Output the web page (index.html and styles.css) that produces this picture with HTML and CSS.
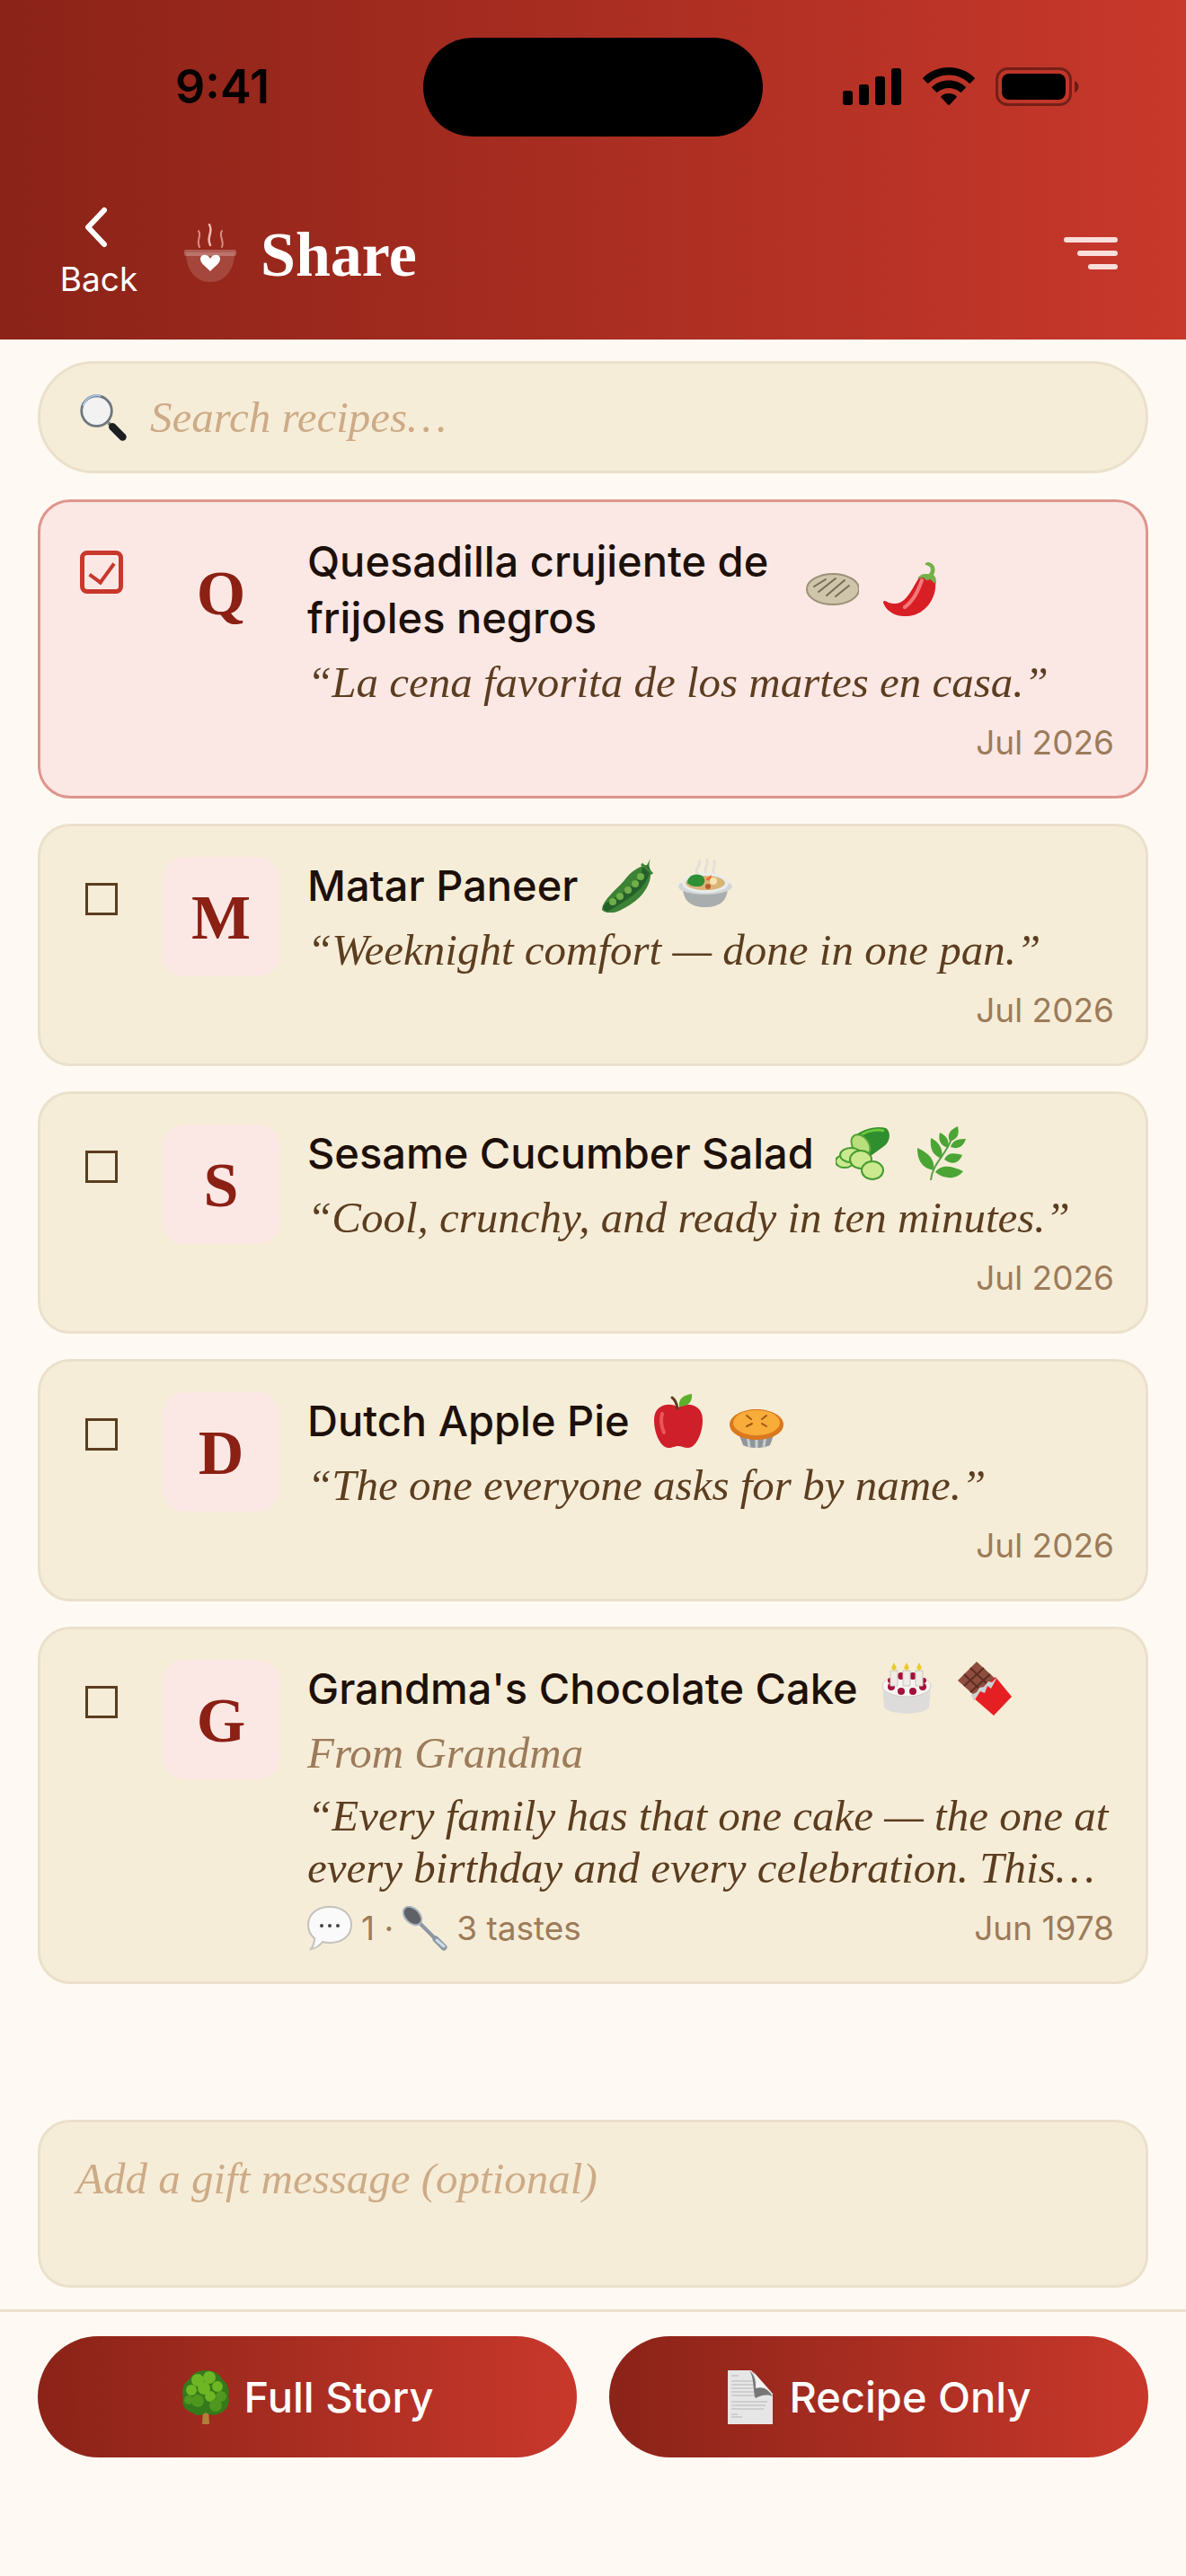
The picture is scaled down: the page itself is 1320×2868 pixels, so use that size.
FILE: index.html
```html
<!DOCTYPE html>
<html lang="en">
<head>
    <meta charset="UTF-8">
    <meta name="viewport" content="width=device-width, initial-scale=1.0">
    <title>Share</title>
    <link rel="stylesheet" href="styles.css">
</head>
<body>
    <header class="header">
        <!-- phone status bar -->
        <div class="status-bar">
            <div class="time">9:41</div>
            <div class="island"></div>
            <div class="status-icons">
                <svg width="66" height="44" viewBox="0 0 66 44">
                    <rect x="0" y="26" width="11" height="16" rx="3"/>
                    <rect x="18" y="19" width="11" height="23" rx="3"/>
                    <rect x="36" y="10" width="11" height="32" rx="3"/>
                    <rect x="54" y="1" width="11" height="41" rx="3"/>
                </svg>
                <svg width="58" height="44" viewBox="0 0 58 44">
                    <path d="M29 0C40 0 50 4 57.500 11.500C58 12 58 12.500 57.500 13L53 17.500C52.500 18 52 18 51.500 17.500C45 11.500 37.500 8.500 29 8.500S13 11.500 6.500 17.500C6 18 5.500 18 5 17.500L.5 13C0 12.500 0 12 .5 11.500C8 4 18 0 29 0Z"/>
                    <path d="M29 14.500C36 14.500 42.500 17 47.500 21.500C48 22 48 22.500 47.500 23L43 27.500C42.500 28 42 28 41.500 27.500C38 24.500 33.500 23 29 23S20 24.500 16.500 27.500C16 28 15.500 28 15 27.500L10.500 23C10 22.500 10 22 10.500 21.500C15.500 17 22 14.500 29 14.500Z"/>
                    <path d="M29 29C32.500 29 35.500 30.200 37.500 32C38 32.500 38 33 37.500 33.500L30 41.500C29.500 42 28.500 42 28 41.500L20.500 33.500C20 33 20 32.500 20.500 32C22.500 30.200 25.500 29 29 29Z"/>
                </svg>
                <svg width="94" height="44" viewBox="0 0 94 44">
                    <rect x="1.500" y="1.500" width="82" height="40" rx="12" fill="none" stroke="#000" stroke-opacity=".4" stroke-width="3"/>
                    <rect x="7" y="7" width="71" height="29" rx="8"/>
                    <path d="M88 15C94 17 94 26 88 28Z" fill-opacity=".45"/>
                </svg>
            </div>
        </div>

        <div class="nav">
            <button class="back" type="button">
                <svg width="30" height="48" viewBox="0 0 30 48">
                    <path d="M21 5L3 24L21 43" fill="none" stroke="#fff" stroke-width="6" stroke-linecap="round" stroke-linejoin="round"/>
                </svg>
                <span>Back</span>
            </button>
            <svg class="logo" width="58" height="66" viewBox="0 0 58 66">
                <g fill="none" stroke="#f3b9b0" stroke-linecap="round">
                    <path d="M16 8C20 14 13 18 17 26" stroke-width="2" opacity=".7"/>
                    <path d="M28 1C33 10 24 14 29 24" stroke-width="2.500"/>
                    <path d="M42 8C38 14 45 18 42 26" stroke-width="2" opacity=".7"/>
                </g>
                <path d="M2 32H56C56 52 45 65 29 65S2 52 2 32Z" fill="#fff" fill-opacity=".15"/>
                <rect x="0" y="29" width="58" height="7" rx="2" fill="#fff" fill-opacity=".25"/>
                <path d="M29 53C22 46 18 44 18 39C18 34 26 33 29 39C32 33 40 34 40 39C40 44 36 46 29 53Z" fill="#fff"/>
            </svg>
            <h1>Share</h1>
            <button class="menu" type="button" aria-label="Menu">
                <span></span>
                <span></span>
                <span></span>
            </button>
        </div>
    </header>

    <main class="content">
        <label class="search">
            <svg width="56" height="56" viewBox="0 0 60 60">
                <path d="M36 36L41 41" stroke="#777" stroke-width="4"/>
                <path d="M41 41L53 53" stroke="#1b1f22" stroke-width="9" stroke-linecap="round"/>
                <circle cx="22" cy="22" r="18" fill="#f2f2f2" stroke="#6d7780" stroke-width="3"/>
                <path d="M6 16A17 17 0 0 1 27 4" fill="none" stroke="#a9cbe8" stroke-width="2"/>
            </svg>
            <input type="text" placeholder="Search recipes…" aria-label="Search recipes">
        </label>

        <div class="recipes">
            <div class="card selected">
                <input type="checkbox" id="r1" checked>
                <div class="avatar">Q</div>
                <div class="info">
                    <div class="title-row">
                        <label class="title long" for="r1">Quesadilla crujiente de frijoles negros</label>
                        <div class="emojis">
                            <svg width="60" height="60" viewBox="0 0 60 60">
                                <ellipse cx="31" cy="30" rx="29" ry="17" fill="#cfc5ab" stroke="#9c9078" stroke-width="2"/>
                                <path d="M10 27L23 19M15 33L34 18M24 37L44 20M34 38L49 26" stroke="#776b57" stroke-width="2" stroke-linecap="round"/>
                            </svg>
                            <svg width="60" height="60" viewBox="0 0 60 60">
                                <path d="M40 17C46 12 56 15 58 22C60 38 48 59 27 60C13 61 3 54 0 45C0 42 3 43 6 45C24 51 31 31 40 17Z" fill="#d91f26"/>
                                <path d="M43 20C39 32 34 43 24 50" fill="none" stroke="#f4787a" stroke-width="4" stroke-linecap="round"/>
                                <path d="M38 18C43 12 45 13 51 13C54 9 54 4 47 3C46 0 49 0 51 0C58 2 59 9 56 14C59 17 59 20 59 24C56 23 54 20 52 19C49 21 47 20 45 17Z" fill="#76b04a"/>
                            </svg>
                        </div>
                    </div>
                    <p class="quote">“La cena favorita de los martes en casa.”</p>
                    <div class="meta"><span class="date">Jul 2026</span></div>
                </div>
            </div>

            <div class="card">
                <input type="checkbox" id="r2">
                <div class="avatar">M</div>
                <div class="info">
                    <div class="title-row">
                        <label class="title" for="r2">Matar Paneer</label>
                        <div class="emojis">
                            <svg width="60" height="60" viewBox="0 0 60 60">
                                <path d="M56 0C54 6 54 8 56 13C58 32 42 48 25 56C17 61 7 62 2 57C3 45 18 35 27 24C34 14 44 8 52 7Z" fill="#3c8236"/>
                                <path d="M8 54C22 45 48 32 51 13" fill="none" stroke="#24602a" stroke-width="9" stroke-linecap="round"/>
                                <g fill="#6fae48">
                                    <circle cx="14" cy="48" r="4"/>
                                    <circle cx="22" cy="42" r="4"/>
                                    <circle cx="31" cy="35" r="4"/>
                                    <circle cx="39" cy="28" r="4"/>
                                    <circle cx="45" cy="20" r="4"/>
                                </g>
                                <path d="M46 6L53 12L58 17" fill="none" stroke="#3c8236" stroke-width="3"/>
                            </svg>
                            <svg width="60" height="60" viewBox="0 0 60 60">
                                <path d="M22 17C16 10 27 8 23 1M31 16C27 9 36 7 31 0M40 17C35 11 44 8 39 2" fill="none" stroke="#e4e0d6" stroke-width="3"/>
                                <path d="M5 34H55C54 47 46 54 30 54S6 47 5 34Z" fill="#a9adae"/>
                                <ellipse cx="30" cy="31" rx="30" ry="9" fill="#d3d6d7"/>
                                <ellipse cx="30" cy="27" rx="26" ry="11" fill="#e9ecec"/>
                                <ellipse cx="30" cy="27" rx="22" ry="8" fill="#d9b476"/>
                                <path d="M10 27C10 20 17 16 24 18C31 20 31 29 24 31C18 31 14 31 10 27Z" fill="#2f8f35"/>
                                <path d="M30 23L37 18L36 25Z" fill="#ee7132"/>
                                <circle cx="39" cy="25" r="4" fill="#f6e3b1"/>
                                <circle cx="33" cy="31" r="3" fill="#bc5c2c"/>
                            </svg>
                        </div>
                    </div>
                    <p class="quote">“Weeknight comfort — done in one pan.”</p>
                    <div class="meta"><span class="date">Jul 2026</span></div>
                </div>
            </div>

            <div class="card">
                <input type="checkbox" id="r3">
                <div class="avatar">S</div>
                <div class="info">
                    <div class="title-row">
                        <label class="title" for="r3">Sesame Cucumber Salad</label>
                        <div class="emojis">
                            <svg width="60" height="60" viewBox="0 0 60 60">
                                <path d="M19 13C28 3 46 -1 56 2C62 6 61 17 54 22L39 33L22 27Z" fill="#2f8e2d"/>
                                <path d="M29 9C38 4 48 3 54 5" fill="none" stroke="#6dc83e" stroke-width="3"/>
                                <ellipse cx="28" cy="21" rx="9" ry="13" transform="rotate(-35 28 21)" fill="#b9df7c" stroke="#56a537" stroke-width="2"/>
                                <g fill="#cbe98f" stroke="#469a31" stroke-width="2">
                                    <ellipse cx="10" cy="39" rx="10" ry="7"/>
                                    <ellipse cx="17" cy="32" rx="12" ry="8"/>
                                    <ellipse cx="28" cy="37" rx="12" ry="10"/>
                                    <ellipse cx="41" cy="49" rx="12" ry="10"/>
                                </g>
                            </svg>
                            <svg width="60" height="60" viewBox="0 0 60 60">
                                <path d="M19 60C20 42 38 30 43 11" fill="none" stroke="#5d9e4c" stroke-width="2"/>
                                <g fill="#4aa535">
                                    <path d="M40 17C36 8 42 3 49 0C51 9 49 14 40 17Z"/>
                                    <path d="M38 24C29 21 27 15 29 7C37 11 40 16 38 24Z"/>
                                    <path d="M41 23C43 15 50 14 58 14C55 23 49 26 41 23Z"/>
                                    <path d="M31 36C20 32 18 24 19 13C29 18 33 26 31 36Z"/>
                                    <path d="M34 37C37 29 45 29 54 32C50 42 42 43 34 37Z"/>
                                    <path d="M22 49C8 46 4 37 4 24C17 30 24 37 22 49Z"/>
                                    <path d="M24 51C31 42 42 44 55 50C47 60 34 59 24 51Z"/>
                                </g>
                            </svg>
                        </div>
                    </div>
                    <p class="quote">“Cool, crunchy, and ready in ten minutes.”</p>
                    <div class="meta"><span class="date">Jul 2026</span></div>
                </div>
            </div>

            <div class="card">
                <input type="checkbox" id="r4">
                <div class="avatar">D</div>
                <div class="info">
                    <div class="title-row">
                        <label class="title" for="r4">Dutch Apple Pie</label>
                        <div class="emojis">
                            <svg width="60" height="60" viewBox="0 0 60 60">
                                <path d="M30 15C38 9 57 10 57 29C57 45 49 60 41 60C36 60 34 58 30 58S24 60 19 60C11 60 3 45 3 29C3 10 22 9 30 15Z" fill="#cf1f2a"/>
                                <path d="M12 22C10 29 11 36 14 43" fill="none" stroke="#ea5558" stroke-width="4" stroke-linecap="round"/>
                                <path d="M29 16C28 10 26 6 23 4" fill="none" stroke="#5d3b22" stroke-width="3" stroke-linecap="round"/>
                                <path d="M31 14C30 5 36 1 45 0C46 9 40 14 31 14Z" fill="#5cb02c"/>
                            </svg>
                            <svg width="60" height="60" viewBox="0 0 60 60">
                                <path d="M8 38L15 57C22 61 38 61 45 57L52 38Z" fill="#8f9599"/>
                                <path d="M20 46L22 59M30 47V60M40 46L38 59" stroke="#c9ced1" stroke-width="3"/>
                                <path d="M0 34C0 25 13 17 30 17S60 25 60 34C60 44 46 51 30 51S0 44 0 34Z" fill="#d9781d"/>
                                <ellipse cx="30" cy="32" rx="26" ry="14" fill="#f8ad3a"/>
                                <path d="M24 28L19 24M36 28L41 24M25 33L19 36M36 33L41 36" stroke="#9e5714" stroke-width="2" stroke-linecap="round"/>
                            </svg>
                        </div>
                    </div>
                    <p class="quote">“The one everyone asks for by name.”</p>
                    <div class="meta"><span class="date">Jul 2026</span></div>
                </div>
            </div>

            <div class="card">
                <input type="checkbox" id="r5">
                <div class="avatar">G</div>
                <div class="info">
                    <div class="title-row">
                        <label class="title" for="r5">Grandma's Chocolate Cake</label>
                        <div class="emojis">
                            <svg width="60" height="60" viewBox="0 0 60 60">
                                <path d="M3 27H57L55 51C49 60 11 60 5 51Z" fill="#dedcdb"/>
                                <ellipse cx="30" cy="27" rx="27" ry="12" fill="#f7f5f2" stroke="#d2cecb"/>
                                <g fill="#a3103c">
                                    <circle cx="24" cy="16" r="4"/>
                                    <circle cx="37" cy="16" r="4"/>
                                    <circle cx="12" cy="21" r="3"/>
                                    <circle cx="49" cy="21" r="3"/>
                                    <circle cx="13" cy="28" r="4"/>
                                    <circle cx="24" cy="33" r="4"/>
                                    <circle cx="37" cy="33" r="4"/>
                                    <circle cx="48" cy="28" r="4"/>
                                </g>
                                <path d="M12 10H20V27H12ZM26 10H34V27H26ZM40 10H48V27H40Z" fill="#eeece4" stroke="#cbc6b8"/>
                                <path d="M16 1L19 7L16 10L13 7ZM30 1L33 7L30 10L27 7ZM44 1L47 7L44 10L41 7Z" fill="#ecc928"/>
                            </svg>
                            <svg width="60" height="60" viewBox="0 0 60 60">
                                <path d="M21 0L44 21L22 41L0 21Z" fill="#8d4e3d"/>
                                <path d="M14 7L36 28M7 14L29 35M29 7L7 27M36 14L14 34" stroke="#5f2d22" stroke-width="2"/>
                                <path d="M42 17L60 39L40 60L17 40Z" fill="#e61f23"/>
                                <path d="M44 17L37 30L33 27L30 35L25 33L18 44L15 37L21 34L24 29L29 28L34 22L38 23Z" fill="#ced0d2"/>
                            </svg>
                        </div>
                    </div>
                    <p class="from">From Grandma</p>
                    <p class="quote">“Every family has that one cake — the one at every birthday and every celebration. This…</p>
                    <div class="meta">
                        <svg width="50" height="50" viewBox="0 0 50 50">
                            <path d="M25 1C39 1 49 9 49 21S39 41 25 41C22 41 20 41 17 40C14 44 10 47 4 48C7 44 8 41 8 36C3 32 1 27 1 21C1 9 11 1 25 1Z" fill="#fafafa" stroke="#c3c1bc" stroke-width="2"/>
                            <circle cx="16" cy="22" r="2" fill="#444"/>
                            <circle cx="25" cy="22" r="2" fill="#444"/>
                            <circle cx="34" cy="22" r="2" fill="#444"/>
                        </svg>
                        <span>1 ·</span>
                        <svg width="50" height="50" viewBox="0 0 50 50">
                            <path d="M18 18L43 43" stroke="#8d97a3" stroke-width="4" stroke-linecap="round"/>
                            <path d="M37 37L46 46" stroke="#8d97a3" stroke-width="7" stroke-linecap="round"/>
                            <path d="M38 38L46 45" stroke="#cddcec" stroke-width="3" stroke-linecap="round"/>
                            <ellipse cx="11" cy="11" rx="8" ry="12" transform="rotate(-45 11 11)" fill="#5e6165" stroke="#aab4bf" stroke-width="2"/>
                        </svg>
                        <span>3 tastes</span>
                        <span class="date">Jun 1978</span>
                    </div>
                </div>
            </div>
        </div>

        <textarea class="message" placeholder="Add a gift message (optional)" aria-label="Gift message"></textarea>
    </main>

    <footer class="footer">
        <button class="button" type="button">
            <svg width="54" height="60" viewBox="0 0 54 60">
                <path d="M24 44H30L31 60H23Z" fill="#b0803b"/>
                <path d="M27 0C35 0 42 3 45 10C51 14 54 21 52 29C55 37 49 46 42 48C36 51 32 50 27 47C22 51 16 51 12 47C4 45 -1 37 2 30C-1 22 3 13 9 10C12 3 19 0 27 0Z" fill="#347a1b"/>
                <g fill="#6fb624">
                    <circle cx="18" cy="11" r="7"/>
                    <circle cx="31" cy="8" r="7"/>
                    <circle cx="11" cy="22" r="6"/>
                    <circle cx="25" cy="20" r="7"/>
                    <circle cx="40" cy="18" r="6"/>
                    <circle cx="32" cy="29" r="6"/>
                </g>
                <g fill="#4f971f">
                    <circle cx="18" cy="34" r="7"/>
                    <circle cx="8" cy="33" r="5"/>
                    <circle cx="44" cy="29" r="6"/>
                    <circle cx="38" cy="39" r="7"/>
                </g>
            </svg>
            Full Story
        </button>
        <button class="button" type="button">
            <svg width="54" height="60" viewBox="0 0 54 60">
                <path d="M2 0H28L52 26V60H2Z" fill="#e6e6e6"/>
                <path d="M6 6H14M6 12H30M6 16H32M6 20H30M6 24H32M6 28H32M6 35H46M6 39H44M6 43H42M6 49H13M6 52H18" stroke="#b5b5b5" stroke-width="1"/>
                <path d="M26 0C33 7 33 12 33 20C41 18 46 20 52 29C45 26 39 28 33 31C30 27 32 9 26 0Z" fill="#777"/>
                <path d="M30 1L51 25C45 19 39 18 34 19C34 12 34 7 30 1Z" fill="#f4f4f4"/>
            </svg>
            Recipe Only
        </button>
    </footer>
</body>
</html>
```

FILE: styles.css
```css
* {
    box-sizing: border-box;
}
body {
    display: flex;
    flex-direction: column;
    min-height: 100vh;
    margin: 0;
    font-family: Inter, "Liberation Sans", sans-serif;
    background-color: #fefaf3;
    color: #1d1009;
}
svg {
    display: block;
    flex-shrink: 0;
}
button {
    border: none;
    font-family: inherit;
    cursor: pointer;
}
.header {
    background: linear-gradient(90deg, #8b2318, #c8382b);
}
.status-bar {
    display: grid;
    grid-template-columns: 1fr 378px 1fr;
    align-items: center;
    padding-top: 42px;
}
.time {
    padding-left: 24px;
    text-align: center;
    font-size: 52px;
    font-weight: 600;
    line-height: 64px;
    color: #000;
}
.island {
    height: 110px;
    border-radius: 55px;
    background-color: #000;
}
.status-icons {
    display: flex;
    justify-content: center;
    gap: 23px;
    padding-right: 30px;
}
.nav {
    display: flex;
    align-items: center;
    padding: 77px 62px 43px 64px;
}
.back {
    display: flex;
    flex-direction: column;
    align-items: center;
    gap: 10px;
    width: 92px;
    padding: 0;
    background: none;
    color: #fff;
    font-size: 37px;
    line-height: 48px;
}
.logo {
    margin: 0 27px 0 49px;
}
h1 {
    flex: 1;
    margin: 0;
    padding-top: 4px;
    font-family: "Liberation Serif", serif;
    font-size: 70px;
    font-weight: 700;
    line-height: 80px;
    color: #fff;
}
.menu {
    display: flex;
    flex-direction: column;
    align-items: flex-end;
    gap: 9px;
    padding: 0 14px 0 0;
    background: none;
}
.menu span {
    width: 60px;
    height: 6px;
    border-radius: 3px;
    background-color: #f9dedb;
}
.menu span:nth-child(2) {
    width: 45px;
}
.menu span:nth-child(3) {
    width: 33px;
}

.content {
    flex: 1;
    display: flex;
    flex-direction: column;
    padding: 24px 42px;
}
.search {
    display: flex;
    align-items: center;
    gap: 24px;
    height: 125px;
    padding: 0 42px;
    border: 3px solid #ebe0cb;
    border-radius: 63px;
    background-color: #f6edd8;
}
.search input {
    flex: 1;
    padding: 0;
    border: none;
    outline: none;
    background: none;
    font: italic 49px "Liberation Serif", serif;
    color: #5c3d20;
}
.search input::placeholder,
.message::placeholder {
    color: #cdab87;
    opacity: 1;
}
.recipes {
    display: flex;
    flex-direction: column;
    gap: 28px;
    margin: 29px 0 auto;
}
.card {
    display: flex;
    align-items: flex-start;
    padding: 34px 35px;
    border: 3px solid #ebe0cb;
    border-radius: 36px;
    background-color: #f6edd8;
}
.card.selected {
    border-color: #df958c;
    background-color: #fbe8e5;
}
.card input {
    appearance: none;
    flex-shrink: 0;
    display: grid;
    place-items: center;
    width: 36px;
    height: 36px;
    margin: 29px 50px 0 15px;
    border: 3px solid #5c3d20;
}
.card input:checked {
    width: 48px;
    height: 48px;
    margin: 20px 44px 0 9px;
    border: 5px solid #c8382b;
    border-radius: 8px;
}
.card input:checked::after {
    content: "";
    width: 13px;
    height: 24px;
    margin-bottom: 4px;
    border: solid #c8382b;
    border-width: 0 4px 4px 0;
    transform: rotate(36deg);
}
.avatar {
    flex-shrink: 0;
    width: 130px;
    height: 133px;
    margin-right: 31px;
    border-radius: 24px;
    background-color: #fbe8e5;
    text-align: center;
    font-family: "Liberation Serif", serif;
    font-size: 70px;
    font-weight: 700;
    line-height: 136px;
    color: #8b2014;
}
.info {
    flex: 1;
    min-width: 0;
    display: flex;
    flex-direction: column;
    gap: 12px;
}
.title-row {
    display: flex;
    align-items: center;
    gap: 24px;
}
.title {
    font-size: 47px;
    font-weight: 500;
    line-height: 63px;
}
.title.long {
    max-width: 530px;
}
.emojis {
    display: flex;
    gap: 27px;
}
.quote,
.from {
    margin: 0;
    font-family: "Liberation Serif", serif;
    font-size: 49px;
    font-style: italic;
    line-height: 58px;
    color: #5c3d20;
}
.from {
    color: #9c7b5a;
}
.meta {
    display: flex;
    align-items: center;
    gap: 10px;
    height: 51px;
    font-size: 37px;
    line-height: 51px;
    color: #9c7b5a;
}
.date {
    margin-left: auto;
}
.message {
    height: 187px;
    padding: 34px 40px;
    border: 3px solid #ebe0cb;
    border-radius: 36px;
    outline: none;
    resize: none;
    background-color: #f6edd8;
    font: italic 49px/58px "Liberation Serif", serif;
    color: #5c3d20;
}

.footer {
    display: grid;
    grid-template-columns: 1fr 1fr;
    gap: 36px;
    padding: 27px 42px 132px;
    border-top: 3px solid #ebe0cb;
}
.button {
    display: flex;
    align-items: center;
    justify-content: center;
    gap: 16px;
    height: 135px;
    border-radius: 68px;
    background: linear-gradient(90deg, #8b2318, #c8382b);
    color: #fff;
    font-size: 47px;
    font-weight: 500;
}
```
